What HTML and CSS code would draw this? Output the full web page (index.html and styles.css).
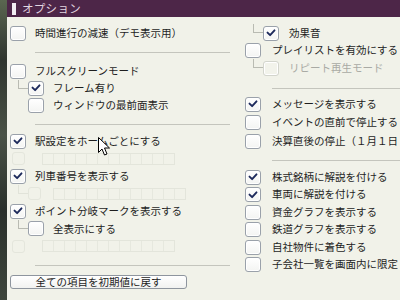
FILE: index.html
```html
<!DOCTYPE html>
<html>
  <head>
    <title>オプション</title>
    <link rel="stylesheet" href="styles.css">
  </head>
  <body>
    <div class="screen">
      <div class="backdrop"></div>
      <div class="window">
        <div class="titlebar">
          <span class="mark"></span>
          <span class="title">オプション</span>
        </div>
        <div class="content">
          <!-- left column -->
          <div class="col col-left">
            <div class="row">
              <span class="cb"></span>
              <span class="label">時間進行の減速（デモ表示用）</span>
            </div>
            <div class="sep sep-a"></div>

            <div class="row short">
              <span class="cb"></span>
              <span class="label">フルスクリーンモード</span>
            </div>
            <div class="row short child">
              <span class="branch"></span>
              <span class="cb on"><svg viewBox="0 0 16 16"><path d="M4 7.5 L7 10.5 L12 5" /></svg></span>
              <span class="label">フレーム有り</span>
            </div>
            <div class="row short child">
              <span class="branch-gap"></span>
              <span class="cb"></span>
              <span class="label">ウィンドウの最前面表示</span>
            </div>
            <div class="sep sep-b"></div>

            <div class="row">
              <span class="cb on"><svg viewBox="0 0 16 16"><path d="M4 7.5 L7 10.5 L12 5" /></svg></span>
              <span class="label">駅設定をホームごとにする</span>
            </div>
            <div class="row ghost">
              <span class="cb"></span>
              <span class="cells">
                <i></i><i></i><i></i><i></i><i></i><i></i><i></i><i></i><i></i><i></i><i></i><i></i>
              </span>
            </div>
            <div class="row">
              <span class="cb on"><svg viewBox="0 0 16 16"><path d="M4 7.5 L7 10.5 L12 5" /></svg></span>
              <span class="label">列車番号を表示する</span>
            </div>
            <div class="row ghost child">
              <span class="branch"></span>
              <span class="cb"></span>
              <span class="cells">
                <i></i><i></i><i></i><i></i><i></i><i></i><i></i><i></i><i></i><i></i><i></i><i></i>
              </span>
            </div>
            <div class="row">
              <span class="cb on"><svg viewBox="0 0 16 16"><path d="M4 7.5 L7 10.5 L12 5" /></svg></span>
              <span class="label">ポイント分岐マークを表示する</span>
            </div>
            <div class="row child">
              <span class="branch"></span>
              <span class="cb"></span>
              <span class="label">全表示にする</span>
            </div>
            <div class="row ghost">
              <span class="cb"></span>
              <span class="cells">
                <i></i><i></i><i></i><i></i><i></i><i></i><i></i><i></i><i></i><i></i><i></i><i></i>
              </span>
            </div>
            <div class="sep sep-c"></div>

            <button class="reset-btn">全ての項目を初期値に戻す</button>
          </div>

          <!-- right column -->
          <div class="col col-right">
            <div class="row child">
              <span class="branch"></span>
              <span class="cb on"><svg viewBox="0 0 16 16"><path d="M4 7.5 L7 10.5 L12 5" /></svg></span>
              <span class="label">効果音</span>
            </div>
            <div class="row">
              <span class="cb"></span>
              <span class="label">プレイリストを有効にする</span>
            </div>
            <div class="row child disabled">
              <span class="branch"></span>
              <span class="cb"></span>
              <span class="label">リピート再生モード</span>
            </div>
            <div class="sep sep-d"></div>

            <div class="row tall">
              <span class="cb on"><svg viewBox="0 0 16 16"><path d="M4 7.5 L7 10.5 L12 5" /></svg></span>
              <span class="label">メッセージを表示する</span>
            </div>
            <div class="row tall">
              <span class="cb"></span>
              <span class="label">イベントの直前で停止する</span>
            </div>
            <div class="row tall">
              <span class="cb"></span>
              <span class="label">決算直後の停止（１月１日</span>
            </div>
            <div class="sep sep-e"></div>

            <div class="row">
              <span class="cb on"><svg viewBox="0 0 16 16"><path d="M4 7.5 L7 10.5 L12 5" /></svg></span>
              <span class="label">株式銘柄に解説を付ける</span>
            </div>
            <div class="row">
              <span class="cb on"><svg viewBox="0 0 16 16"><path d="M4 7.5 L7 10.5 L12 5" /></svg></span>
              <span class="label">車両に解説を付ける</span>
            </div>
            <div class="row">
              <span class="cb"></span>
              <span class="label">資金グラフを表示する</span>
            </div>
            <div class="row">
              <span class="cb"></span>
              <span class="label">鉄道グラフを表示する</span>
            </div>
            <div class="row">
              <span class="cb"></span>
              <span class="label">自社物件に着色する</span>
            </div>
            <div class="row">
              <span class="cb"></span>
              <span class="label">子会社一覧を画面内に限定</span>
            </div>
          </div>
        </div>
      </div>

      <!-- mouse pointer over the list -->
      <svg class="cursor" width="13" height="20" viewBox="0 0 13 20">
        <path d="M0.5 0.5 L0.5 15.5 L4 12 L6.5 18 L9 17 L6.5 11 L11.5 11 Z" />
      </svg>
    </div>
  </body>
</html>
```

FILE: styles.css
```css
html,
body {
  margin: 0;
  padding: 0;
  width: 400px;
  height: 300px;
  overflow: hidden;
}
body {
  font-family: "Noto Sans CJK JP", "Noto Sans", sans-serif;
  color: #1e1e1e;
}
.screen {
  position: relative;
  display: flex;
  width: 400px;
  height: 300px;
}
.backdrop {
  width: 7px;
  flex: none;
  background: linear-gradient(180deg, #5a6650 0%, #2f352e 20%, #4a5246 45%, #2a302b 70%, #3e463c 100%);
}
.window {
  flex: 1;
  display: flex;
  flex-direction: column;
  background: #f1f2e9;
  min-width: 0;
}
.titlebar {
  height: 17px;
  flex: none;
  display: flex;
  align-items: center;
  background: #4d2648;
  padding-left: 5px;
}
.mark {
  width: 4px;
  height: 12px;
  background: #f3eef3;
  margin-right: 6px;
}
.title {
  color: #e2d6e0;
  font-size: 11.5px;
  letter-spacing: 0.3px;
  line-height: 1;
}
.content {
  flex: 1;
  display: grid;
  grid-template-columns: 234px 1fr;
  min-width: 0;
}
.col {
  display: flex;
  flex-direction: column;
  padding-top: 7.25px;
  min-width: 0;
}
.col-left {
  padding-left: 3px;
}
.col-right {
  padding-left: 4px;
}
.row {
  display: flex;
  align-items: center;
  height: 17.5px;
  gap: 9px;
  white-space: nowrap;
}
.col-right .row {
  gap: 11px;
}
.col-right .row.child {
  gap: 0;
}
.row.short {
  height: 17px;
}
.row.tall {
  height: 18.5px;
}
.row.child {
  padding-left: 8px;
  gap: 0;
}
.row.child .cb {
  margin-right: 9px;
}
.col-right .row.child .cb {
  margin-right: 10px;
}
.branch,
.branch-gap {
  align-self: flex-start;
  width: 10px;
  height: 9px;
  flex: none;
  box-sizing: border-box;
}
.branch {
  border-left: 1px solid #b9bbb2;
  border-bottom: 1px solid #b9bbb2;
}
.label {
  font-size: 10.5px;
  line-height: 1;
}
.cb {
  width: 16px;
  height: 15px;
  flex: none;
  box-sizing: border-box;
  border: 1px solid #9aa1aa;
  border-radius: 3px;
  background: linear-gradient(180deg, #ffffff 0%, #f3f4f2 100%);
  box-shadow: inset 0 0 0 1px #ffffff;
  display: flex;
  align-items: center;
  justify-content: center;
}
.cb svg {
  width: 14px;
  height: 14px;
}
.cb svg path {
  fill: none;
  stroke: #1d2a5c;
  stroke-width: 2.2;
  stroke-linecap: round;
  stroke-linejoin: round;
}
.disabled .cb {
  border-color: #d3d5cd;
  background: #f2f3eb;
}
.disabled .label {
  color: #a9aaa4;
}
.ghost .cb {
  width: 13px;
  height: 13px;
  margin-left: 2px;
  border-color: #e4e6dc;
  background: transparent;
  box-shadow: none;
}
.ghost .branch {
  border-color: #e1e3d9;
}
.ghost.child .cb {
  margin-left: 0;
  margin-right: 12px;
}
.cells {
  display: flex;
  height: 10px;
  border: 1px solid #e3e5db;
  margin-left: 8px;
}
.ghost.child .cells {
  margin-left: 0;
}
.cells i {
  width: 10px;
  border-right: 1px solid #e6e8de;
}
.cells i:last-child {
  border-right: none;
}
.sep {
  height: 1px;
  background: #c4c5bd;
  flex: none;
}
.sep-a {
  margin: 10px 11px 9.75px 25px;
}
.sep-b {
  margin: 10px 11px 8px 25px;
}
.sep-c {
  margin: 10px 11px 9px 25px;
}
.sep-d {
  margin: 11px 0 6px 27px;
}
.sep-e {
  margin: 9.5px 0 7.5px 27px;
}
.reset-btn {
  width: 177px;
  height: 14px;
  padding: 0;
  border: 1px solid #8e959e;
  border-radius: 3px;
  background: linear-gradient(180deg, #ffffff 0%, #f1f2f0 100%);
  font-family: "Noto Sans CJK JP", "Noto Sans", sans-serif;
  font-size: 10.5px;
  line-height: 1;
  color: #1e1e1e;
}
.cursor {
  position: absolute;
  left: 98px;
  top: 137px;
}
.cursor path {
  fill: #ffffff;
  stroke: #000000;
  stroke-width: 1;
  stroke-linejoin: miter;
}
```
